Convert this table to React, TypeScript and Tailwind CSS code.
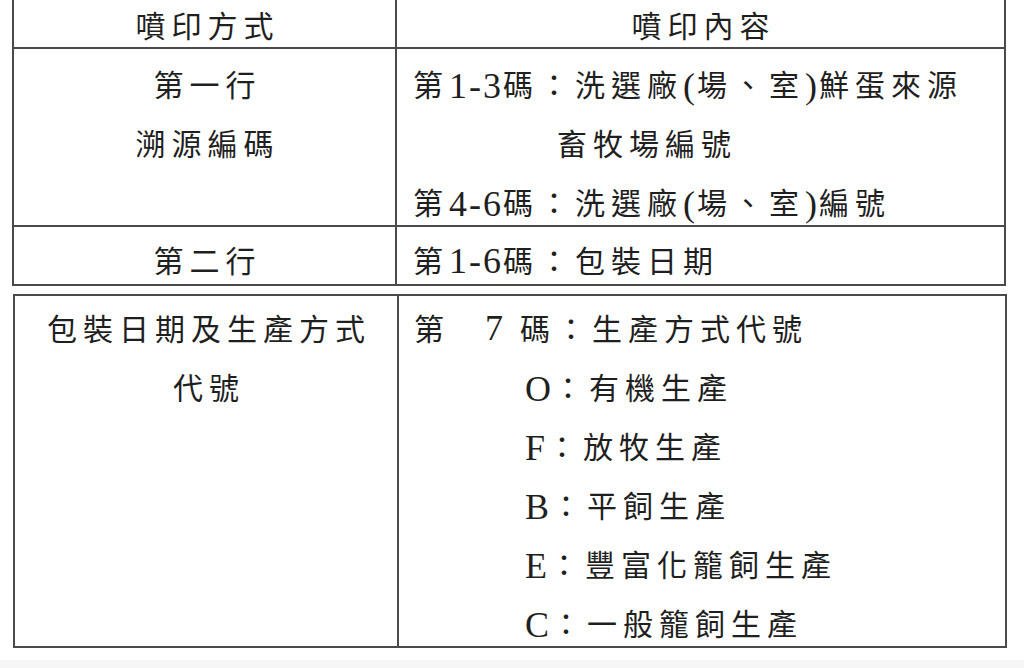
import React from "react";

const font = {
  fontFamily: "'Liberation Serif', 'Noto Sans CJK TC', serif",
};

function Line({ children, className = "" }: { children: React.ReactNode; className?: string }) {
  return <div className={"h-[59px] shrink-0 flex items-center whitespace-nowrap " + className}>{children}</div>;
}

function L({ children }: { children: React.ReactNode }) {
  return <span className="text-[36px] tracking-[2px] leading-none">{children}</span>;
}

export default function App() {
  return (
    <div
      className="w-[1024px] h-[668px] bg-white text-[#1f1f1f] text-[30px] tracking-[6px] overflow-hidden flex flex-col"
      style={font}
    >
      {/* Table 1 */}
      <div className="ml-[12px] w-[994px] shrink-0 border-x-2 border-b-2 border-[#4a4a4a] grid grid-cols-[383px_1fr] grid-rows-[47px_2px_176px_2px_57px]">
        <div className="border-r-2 border-[#4a4a4a] flex items-center justify-center pt-[6px] pl-[6px]">噴印方式</div>
        <div className="flex items-center justify-center pt-[6px] pl-[6px]">噴印內容</div>
        <div className="col-span-2 bg-[#4a4a4a]" />
        <div className="border-r-2 border-[#4a4a4a] pt-[7px] flex flex-col items-center">
          <Line className="pl-[6px]">第一行</Line>
          <Line className="pl-[6px]">溯源編碼</Line>
        </div>
        <div className="pt-[7px] pl-[16px] flex flex-col">
          <Line>
            第<L>1-3</L>碼：洗選廠<L>(</L>場、室<L>)</L>鮮蛋來源
          </Line>
          <Line className="pl-[144px]">畜牧場編號</Line>
          <Line>
            第<L>4-6</L>碼：洗選廠<L>(</L>場、室<L>)</L>編號
          </Line>
        </div>
        <div className="col-span-2 bg-[#4a4a4a]" />
        <div className="border-r-2 border-[#4a4a4a] flex items-center justify-center pt-[11px] pl-[6px]">第二行</div>
        <div className="flex items-center pt-[11px] pl-[16px] whitespace-nowrap">
          第<L>1-6</L>碼：包裝日期
        </div>
      </div>

      {/* Table 2 */}
      <div className="mt-[8px] ml-[13px] w-[994px] h-[354px] shrink-0 border-2 border-[#4a4a4a] grid grid-cols-[384px_1fr] grid-rows-[350px]">
        <div className="border-r-2 border-[#4a4a4a] pt-[4px] flex flex-col items-center">
          <Line className="pl-[6px]">包裝日期及生產方式</Line>
          <Line className="pl-[6px]">代號</Line>
        </div>
        <div className="pt-[4px] pl-[15px] flex flex-col">
          <Line>
            <span>第</span>
            <span className="ml-[35px]">
              <L>7</L>
            </span>
            <span className="ml-[15px]">碼：生產方式代號</span>
          </Line>
          <div className="pl-[111px] flex flex-col">
            <Line>
              <L>O</L>：有機生產
            </Line>
            <Line>
              <L>F</L>：放牧生產
            </Line>
            <Line>
              <L>B</L>：平飼生產
            </Line>
            <Line>
              <L>E</L>：豐富化籠飼生產
            </Line>
            <Line>
              <L>C</L>：一般籠飼生產
            </Line>
          </div>
        </div>
      </div>

      <div className="flex-1 mt-[12px] bg-[#f6f6f6]" />
    </div>
  );
}
